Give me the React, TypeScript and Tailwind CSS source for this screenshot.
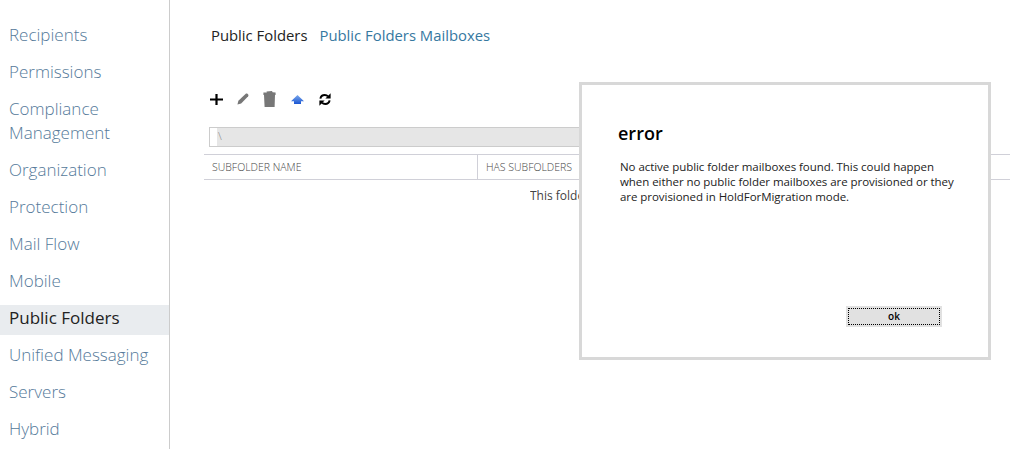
import React from 'react';

const navItems = [
  'Recipients',
  'Permissions',
  'Compliance Management',
  'Organization',
  'Protection',
  'Mail Flow',
  'Mobile',
  'Public Folders',
  'Unified Messaging',
  'Servers',
  'Hybrid',
];

const ToolbarIcons = () => (
  <div className="flex items-center h-5 ml-[6px]">
    {/* add */}
    <svg width="13" height="11" viewBox="0 0 13 11" className="mr-[14px]">
      <path d="M0 5.5h13M6.5 0v11" stroke="#000" strokeWidth="2.2" />
    </svg>
    {/* edit */}
    <svg width="12" height="12" viewBox="0 0 13 13" className="mr-[14px]">
      <path d="M0.5 12.5l1-4L9.5 0.8c.6-.5 1.2-.4 1.8.1l.8.8c.5.6.5 1.2 0 1.8L4.5 11.5z" fill="#777" />
    </svg>
    {/* delete */}
    <svg width="13" height="16" viewBox="0 0 13 16" className="mr-[15px]">
      <path d="M3.5 0.5L9 0l.6 1.2 3 .4V4H.4V1.6l3.4-.2zM1 4h11l-.4 12H1.6z" fill="#777" />
    </svg>
    {/* move up */}
    <svg width="13" height="9" viewBox="0 0 13 9" className="mr-[15px]">
      <defs>
        <linearGradient id="up" x1="0" y1="0" x2="0" y2="1">
          <stop offset="0" stopColor="#7ba8ea" />
          <stop offset="1" stopColor="#1a56d4" />
        </linearGradient>
      </defs>
      <path d="M6.5 0L13 6.2H10V9H3V6.2H0z" fill="url(#up)" />
    </svg>
    {/* refresh */}
    <svg width="12" height="13" viewBox="0 0 12 13" fill="none">
      <path d="M1.4 5.6C1.8 3.4 3.6 2 5.8 2c1.3 0 2.4.5 3.2 1.4" stroke="#000" strokeWidth="2" />
      <path d="M11.6 0.2V5.6H6.4z" fill="#000" />
      <path d="M10.6 7.4c-.4 2.2-2.2 3.6-4.4 3.6-1.3 0-2.4-.5-3.2-1.4" stroke="#000" strokeWidth="2" />
      <path d="M0.4 12.8V7.4H5.6z" fill="#000" />
    </svg>
  </div>
);

const ErrorDialog = () => (
  <div className="absolute left-[579px] top-[82px] w-[412px] h-[278px] bg-white border-[3px] border-[#d8d8d8] font-['Open_Sans',sans-serif]">
    <h1 className="absolute left-[36px] top-[36px] text-[18px] leading-6 font-semibold text-black">error</h1>
    <p className="absolute left-[38px] top-[74px] w-[340px] text-[11.5px] leading-[15px] font-medium tracking-[-0.05px] text-[#222]">
      No active public folder mailboxes found. This could happen when either no public folder mailboxes are provisioned or they are provisioned in HoldForMigration mode.
    </p>
    <button className="absolute left-[264px] top-[221px] w-[96px] h-[21px] bg-[#e1e1e1] p-[2px] text-black">
      <span className="flex items-center justify-center h-full border border-dotted border-black text-[10px] font-semibold">ok</span>
    </button>
  </div>
);

export default function App() {
  return (
    <div className="relative flex h-screen overflow-hidden bg-white font-['Open_Sans',sans-serif]">
      <aside className="w-[170px] shrink-0 border-r border-[#ccc] pt-[22px] flex flex-col gap-[7px]">
        {navItems.map((item) => (
          <div
            key={item}
            className={
              item === 'Public Folders'
                ? 'px-[9px] pt-[1px] pb-[5px] bg-[#e9ecef] text-[#222] text-[17px] leading-6 font-normal'
                : 'px-[9px] pt-[1px] pb-[5px] text-[#557a9a] text-[17px] leading-6 font-light'
            }
          >
            {item}
          </div>
        ))}
      </aside>

      <main className="flex-1 min-w-0 pl-[34px]">
        <div className="flex gap-3 pl-[7px] pt-[25px] text-[14.85px] leading-5">
          <span className="text-[#222]">Public Folders</span>
          <span className="text-[#36789f]">Public Folders Mailboxes</span>
        </div>

        <div className="mt-[44px]">
          <ToolbarIcons />
        </div>

        <div className="mt-[18px] ml-[5px] w-[500px] h-5 border border-[#ccc] bg-[#e6e6e6] flex">
          <div className="w-[7px] bg-white shrink-0" />
          <span className="pl-[1px] text-[11px] leading-4 text-[#888] font-light">\</span>
        </div>

        <div className="mt-[7px] flex h-[26px] border-y border-[#d0d0d8] text-[10.5px] leading-[24px] font-light text-[#444] uppercase">
          <div className="w-[274px] pl-2 border-r border-[#d0d0d8]">Subfolder Name</div>
          <div className="pl-2">Has Subfolders</div>
        </div>

        <div className="ml-[326px] mt-[6px] w-[49px] overflow-hidden whitespace-nowrap text-[12px] leading-5 text-[#444]">This folder is empty.</div>
      </main>

      <ErrorDialog />
    </div>
  );
}
